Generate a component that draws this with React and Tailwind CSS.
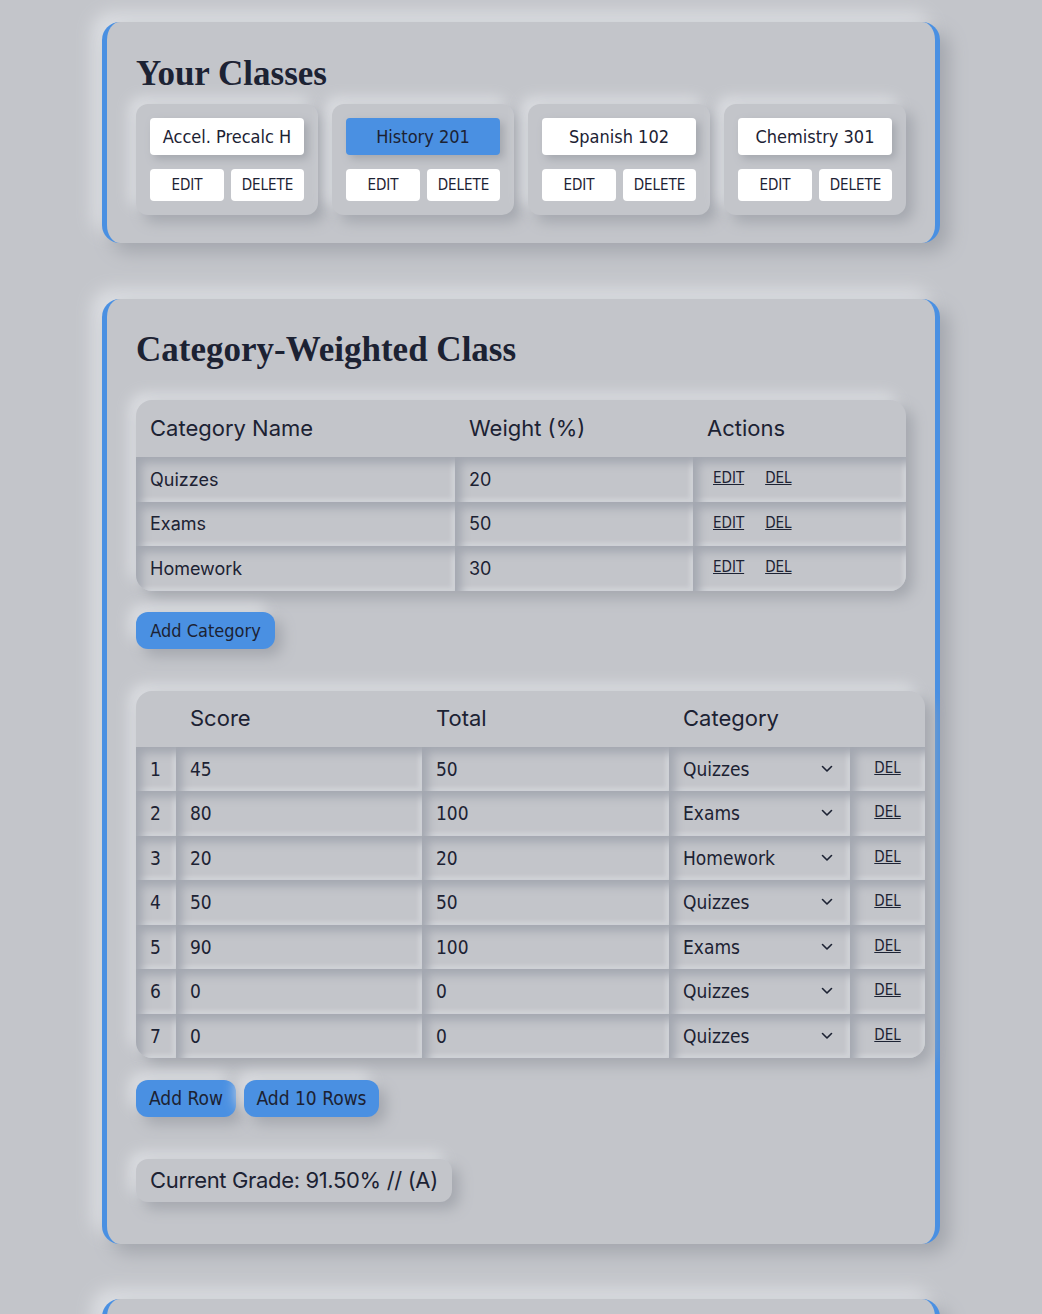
import React from 'react';

const SERIF = "font-['Liberation_Serif',serif]";
const SANS = "font-['Inter',sans-serif]";
const UI = "font-['DejaVu_Sans_Condensed','DejaVu_Sans',sans-serif]";

const CLASSES = [
  { name: 'Accel. Precalc H', active: false },
  { name: 'History 201', active: true },
  { name: 'Spanish 102', active: false },
  { name: 'Chemistry 301', active: false },
];

const CATEGORIES = [
  { name: 'Quizzes', weight: 20 },
  { name: 'Exams', weight: 50 },
  { name: 'Homework', weight: 30 },
];

const ROWS = [
  { score: 45, total: 50, cat: 'Quizzes' },
  { score: 80, total: 100, cat: 'Exams' },
  { score: 20, total: 20, cat: 'Homework' },
  { score: 50, total: 50, cat: 'Quizzes' },
  { score: 90, total: 100, cat: 'Exams' },
  { score: 0, total: 0, cat: 'Quizzes' },
  { score: 0, total: 0, cat: 'Quizzes' },
];

const OUT = 'shadow-[7px_7px_14px_#a4a7ae,-7px_-7px_14px_#dcdee2]';
const INSET = 'shadow-[inset_6px_6px_10px_#a3a7b0,inset_-3px_-3px_4px_#d5d7db]';
const ROW_H = 'h-[44.5px]';

function Chevron() {
  return (
    <svg width="12" height="8" viewBox="0 0 12 8" fill="none" className="shrink-0">
      <path d="M1.5 1.5 L6 6 L10.5 1.5" stroke="#1c2233" strokeWidth="1.6" strokeLinecap="round" strokeLinejoin="round" />
    </svg>
  );
}

function Card({ children, className = '' }) {
  return (
    <section className={`mx-auto w-[838px] rounded-[18px] border-x-[5px] border-[#4a90e2] bg-[#c3c5ca] px-[29px] shadow-[9px_9px_18px_#a3a6ad,-9px_-9px_18px_#dfe1e5] ${className}`}>
      {children}
    </section>
  );
}

export default function App() {
  return (
    <div className="min-h-screen bg-[#c3c5ca] pt-[22px] pb-10 text-[#1c2233]">
      {/* Your classes */}
      <Card className="pt-[30px] pb-[28px]">
        <h2 className={`${SERIF} text-[35px] leading-[44px] font-bold mb-[8px]`}>Your Classes</h2>
        <div className="flex gap-[14px]">
          {CLASSES.map(c => (
            <div key={c.name} className={`w-[182px] p-[14px] rounded-[12px] bg-[#c3c5ca] ${OUT}`}>
              <div className={`${UI} h-[37px] rounded-[4px] flex items-center justify-center text-[18px] shadow-[4px_4px_8px_#a4a7ae] ${c.active ? 'bg-[#4a90e2]' : 'bg-white'}`}>
                {c.name}
              </div>
              <div className="mt-[14px] flex gap-[7px]">
                <div className={`${UI} w-[74px] h-[32px] rounded-[4px] bg-white flex items-center justify-center text-[15px]`}>EDIT</div>
                <div className={`${UI} w-[73px] h-[32px] rounded-[4px] bg-white flex items-center justify-center text-[15px]`}>DELETE</div>
              </div>
            </div>
          ))}
        </div>
      </Card>

      {/* Category-weighted class */}
      <Card className="mt-[56px] pt-[29px] pb-[42px]">
        <h1 className={`${SERIF} text-[35px] leading-[44px] font-bold mb-[28px]`}>Category-Weighted Class</h1>

        <div className={`rounded-[16px] overflow-hidden ${OUT}`}>
          <div className={`${SANS} grid grid-cols-[319px_238px_213px] h-[57px] items-center text-[22px]`}>
            <div className="px-[14px]">Category Name</div>
            <div className="px-[14px]">Weight (%)</div>
            <div className="px-[14px]">Actions</div>
          </div>
          {CATEGORIES.map(c => (
            <div key={c.name} className={`grid grid-cols-[319px_238px_213px] ${ROW_H}`}>
              <div className={`${SANS} ${INSET} px-[14px] flex items-center text-[18px]`}>{c.name}</div>
              <div className={`${SANS} ${INSET} px-[14px] flex items-center text-[18px]`}>{c.weight}</div>
              <div className={`${UI} ${INSET} pl-[20px] pt-[10px] flex gap-[21px] text-[15px]`}>
                <span className="underline">EDIT</span>
                <span className="underline">DEL</span>
              </div>
            </div>
          ))}
        </div>

        <button className={`${UI} mt-[21px] h-[37px] w-[139px] rounded-[12px] bg-[#4a90e2] text-[18px] ${OUT}`}>
          Add Category
        </button>

        <div className={`mt-[42px] w-[789px] rounded-[16px] overflow-hidden ${OUT}`}>
          <div className={`${SANS} grid grid-cols-[40px_246px_247px_181px_75px] h-[56px] items-center text-[22px]`}>
            <div />
            <div className="px-[14px]">Score</div>
            <div className="px-[14px]">Total</div>
            <div className="px-[14px]">Category</div>
            <div />
          </div>
          {ROWS.map((r, i) => (
            <div key={i} className={`${UI} grid grid-cols-[40px_246px_247px_181px_75px] ${ROW_H} text-[19px]`}>
              <div className={`${INSET} pl-[14px] flex items-center`}>{i + 1}</div>
              <div className={`${INSET} pl-[14px] flex items-center`}>{r.score}</div>
              <div className={`${INSET} pl-[14px] flex items-center`}>{r.total}</div>
              <div className={`${INSET} pl-[14px] pr-[17px] flex items-center justify-between`}>
                <span>{r.cat}</span>
                <Chevron />
              </div>
              <div className={`${INSET} flex justify-center pt-[10px] text-[15px]`}>
                <span className="underline">DEL</span>
              </div>
            </div>
          ))}
        </div>

        <div className="mt-[22px] flex gap-[8px]">
          <button className={`${UI} h-[37px] w-[100px] rounded-[12px] bg-[#4a90e2] text-[19px] ${OUT}`}>Add Row</button>
          <button className={`${UI} h-[37px] w-[135px] rounded-[12px] bg-[#4a90e2] text-[19px] ${OUT}`}>Add 10 Rows</button>
        </div>

        <div className={`${SANS} mt-[42px] inline-flex h-[43px] items-center px-[14px] rounded-[12px] text-[22px] tracking-[-0.35px] ${OUT}`}>
          Current Grade: 91.50% // (A)
        </div>
      </Card>

      {/* Next class */}
      <Card className="mt-[55px] h-[300px]">
        <div />
      </Card>
    </div>
  );
}
